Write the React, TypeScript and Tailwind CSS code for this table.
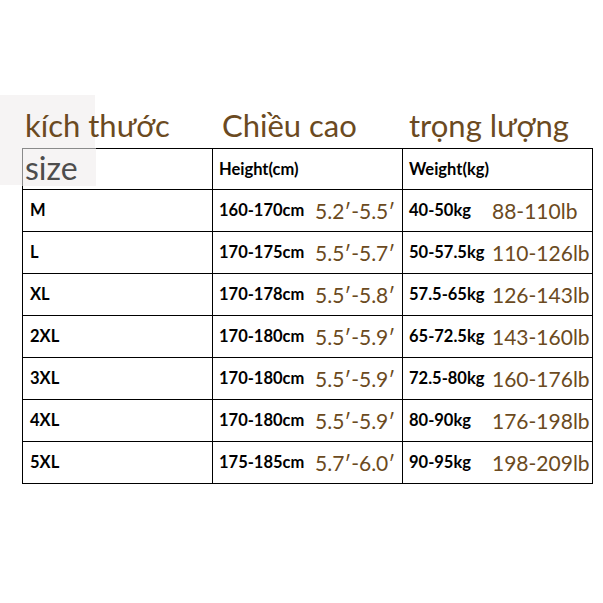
import React from "react";

interface SizeRow {
  size: string;
  cm: string;
  ft: string;
  kg: string;
  lb: string;
}

const rows: SizeRow[] = [
  { size: "M", cm: "160-170cm", ft: "5.2′-5.5′", kg: "40-50kg", lb: "88-110lb" },
  { size: "L", cm: "170-175cm", ft: "5.5′-5.7′", kg: "50-57.5kg", lb: "110-126lb" },
  { size: "XL", cm: "170-178cm", ft: "5.5′-5.8′", kg: "57.5-65kg", lb: "126-143lb" },
  { size: "2XL", cm: "170-180cm", ft: "5.5′-5.9′", kg: "65-72.5kg", lb: "143-160lb" },
  { size: "3XL", cm: "170-180cm", ft: "5.5′-5.9′", kg: "72.5-80kg", lb: "160-176lb" },
  { size: "4XL", cm: "170-180cm", ft: "5.5′-5.9′", kg: "80-90kg", lb: "176-198lb" },
  { size: "5XL", cm: "175-185cm", ft: "5.7′-6.0′", kg: "90-95kg", lb: "198-209lb" },
];

const font = { fontFamily: "Lato, 'Noto Sans', sans-serif" };

const App = () => {
  return (
    <div className="relative w-[603px] h-[603px] bg-white overflow-hidden" style={font}>
      {/* light grey patch behind the top-left title */}
      <div className="absolute left-0 top-[95px] w-[95px] h-[90px] bg-[#f6f4f4]" />

      <div className="relative pl-[22px] pt-[106px]">
        {/* titles */}
        <div className="grid grid-cols-[190px_190px_190px] h-[42px] text-[31px] leading-[38px] text-[#6b4a21] whitespace-nowrap">
          <span className="pl-[3px]">kích thước</span>
          <span className="pl-[10px]">Chiều cao</span>
          <span className="pl-[7px]">trọng lượng</span>
        </div>

        {/* table */}
        <div className="w-[571px] border-l border-black">
          <div className="grid grid-cols-[190px_190px_190px] h-[42px]">
            <div className="relative border-t border-r border-b border-black">
              <div className="absolute -left-px -top-px w-[74px] h-[38px] bg-[#f6f4f4] border-l border-t border-[#8a8a8a] flex items-center pl-[2px] text-[32px] leading-none text-[#4d4d4d]">
                size
              </div>
            </div>
            <div className="border-t border-r border-b border-black flex items-center pl-[6px] text-[16.5px] font-bold text-black">
              Height(cm)
            </div>
            <div className="border-t border-r border-b border-black flex items-center pl-[6px] text-[16.5px] font-bold text-black">
              Weight(kg)
            </div>
          </div>

          {rows.map((r) => (
            <div key={r.size} className="grid grid-cols-[190px_190px_190px] h-[42px]">
              <div className="border-r border-b border-black flex items-center pl-[7px] text-[16.5px] font-bold text-black">
                {r.size}
              </div>
              <div className="border-r border-b border-black grid grid-cols-[96px_1fr] items-center pl-[6px]">
                <span className="text-[16.5px] font-bold text-black whitespace-nowrap">{r.cm}</span>
                <span className="text-[21px] text-[#6b4a21] whitespace-nowrap">{r.ft}</span>
              </div>
              <div className="border-r border-b border-black grid grid-cols-[83px_1fr] items-center pl-[6px]">
                <span className="text-[16.5px] font-bold text-black whitespace-nowrap">{r.kg}</span>
                <span className="text-[21px] text-[#6b4a21] whitespace-nowrap">{r.lb}</span>
              </div>
            </div>
          ))}
        </div>
      </div>
    </div>
  );
};

export default App;
